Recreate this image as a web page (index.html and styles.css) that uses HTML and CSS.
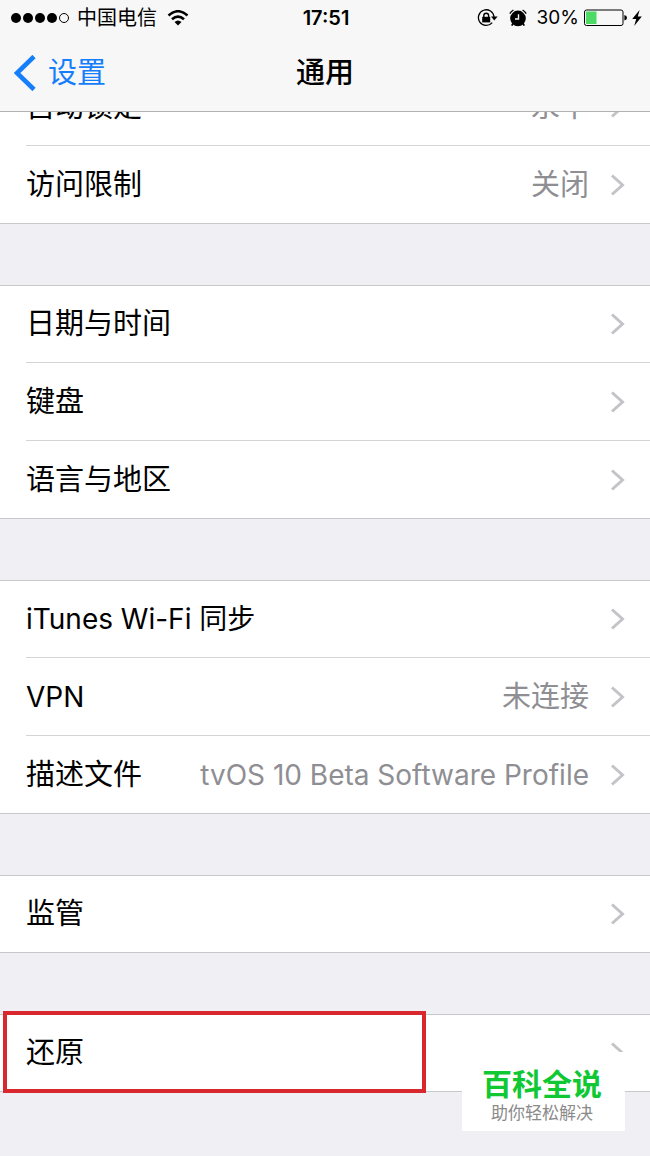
FILE: index.html
```html
<!DOCTYPE html>
<html lang="zh-CN">
<head>
    <meta charset="UTF-8">
    <meta name="viewport" content="width=device-width, initial-scale=1.0">
    <title>通用</title>
    <link rel="stylesheet" href="styles.css">
</head>
<body>
    <svg class="defs" aria-hidden="true">
        <symbol id="chevron" viewBox="0 0 16 24">
            <path d="M2 2.5 L12.5 12 L2 21.5" fill="none" stroke="#c3c3c8" stroke-width="3"/>
        </symbol>
    </svg>

    <header class="header">
        <div class="status">
            <div class="status-left">
                <svg class="signal" viewBox="0 0 60 12">
                    <circle cx="6" cy="6" r="5"/>
                    <circle cx="18" cy="6" r="5"/>
                    <circle cx="30" cy="6" r="5"/>
                    <circle cx="42" cy="6" r="5"/>
                    <circle cx="54" cy="6" r="4.5" fill="none" stroke="#000"/>
                </svg>
                <span class="carrier">中国电信</span>
                <svg class="wifi" viewBox="0 0 22 16">
                    <path d="M1.5 5.5 Q11 -3 20.5 5.5" fill="none" stroke="#000" stroke-width="2.6"/>
                    <path d="M5 9.3 Q11 3.8 17 9.3" fill="none" stroke="#000" stroke-width="2.6"/>
                    <path d="M7.5 12 Q11 8.8 14.5 12 L11 15.6 Z"/>
                </svg>
            </div>
            <span class="time">17:51</span>
            <div class="status-right">
                <svg class="lock" viewBox="0 0 22 18">
                    <path d="M15.2 13.6 A7.8 7.8 0 1 1 17 8" fill="none" stroke="#000" stroke-width="1.3"/>
                    <path d="M14 7.6 H20.6 L17.3 11.6 Z"/>
                    <rect x="5.2" y="7.8" width="8" height="5.6"/>
                    <path d="M6.8 8.5 V6.6 A2.4 2.4 0 0 1 11.6 6.6 V8.5" fill="none" stroke="#000" stroke-width="1.4"/>
                </svg>
                <svg class="alarm" viewBox="0 0 18 18">
                    <circle cx="9" cy="9.4" r="7.8"/>
                    <path d="M0.8 4.6 A10 10 0 0 1 4.4 1 M13.6 1 A10 10 0 0 1 17.2 4.6" fill="none" stroke="#000" stroke-width="1.4"/>
                    <path d="M4 14.4 L2.8 16.6 M14 14.4 L15.2 16.6" stroke="#000" stroke-width="1.8"/>
                    <path d="M9.5 5.2 V10 H6" fill="none" stroke="#f7f7f7" stroke-width="1.4"/>
                </svg>
                <span class="percent">30%</span>
                <svg class="battery" viewBox="0 0 44 18">
                    <rect x="0.5" y="1" width="38.5" height="15.5" rx="2" fill="none" stroke="#000"/>
                    <rect x="2" y="2.5" width="10.5" height="12.5" fill="#4cd964"/>
                    <path d="M40.4 6 Q43 6.6 43 8.8 Q43 11 40.4 11.6 Z"/>
                </svg>
                <svg class="bolt" viewBox="0 0 10 16">
                    <path d="M7.6 0 L0.2 9 H4.2 L2.2 16 L9.8 6.4 H5.8 Z"/>
                </svg>
            </div>
        </div>
        <nav class="navbar">
            <a href="#" class="back">
                <svg class="back-icon" viewBox="0 0 22 36">
                    <path d="M20 1.5 L3 18 L20 34.5" fill="none" stroke="#157efb" stroke-width="4.6"/>
                </svg>
                设置
            </a>
            <h1 class="title">通用</h1>
        </nav>
    </header>

    <main class="settings">
        <ul class="group">
            <li><a href="#" class="row"><span>自动锁定</span><span class="value">永不</span><svg class="arrow"><use href="#chevron"/></svg></a></li>
            <li><a href="#" class="row"><span>访问限制</span><span class="value">关闭</span><svg class="arrow"><use href="#chevron"/></svg></a></li>
        </ul>
        <ul class="group">
            <li><a href="#" class="row"><span>日期与时间</span><svg class="arrow"><use href="#chevron"/></svg></a></li>
            <li><a href="#" class="row"><span>键盘</span><svg class="arrow"><use href="#chevron"/></svg></a></li>
            <li><a href="#" class="row"><span>语言与地区</span><svg class="arrow"><use href="#chevron"/></svg></a></li>
        </ul>
        <ul class="group">
            <li><a href="#" class="row"><span class="latin">iTunes Wi-Fi 同步</span><svg class="arrow"><use href="#chevron"/></svg></a></li>
            <li><a href="#" class="row"><span class="latin">VPN</span><span class="value">未连接</span><svg class="arrow"><use href="#chevron"/></svg></a></li>
            <li><a href="#" class="row"><span>描述文件</span><span class="value latin">tvOS 10 Beta Software Profile</span><svg class="arrow"><use href="#chevron"/></svg></a></li>
        </ul>
        <ul class="group">
            <li><a href="#" class="row"><span>监管</span><svg class="arrow"><use href="#chevron"/></svg></a></li>
        </ul>
        <ul class="group reset">
            <li><a href="#" class="row"><span>还原</span><svg class="arrow"><use href="#chevron"/></svg></a></li>
            <li class="highlight" aria-hidden="true"></li>
            <li class="badge">
                <strong>百科全说</strong>
                <span>助你轻松解决</span>
            </li>
        </ul>
    </main>
</body>
</html>
```

FILE: styles.css
```css
*{
    margin: 0;
    padding: 0;
    box-sizing: border-box;
}
body{
    min-height: 100vh;
    background-color: #efeff4;
    color: #000;
    font-family: Inter, "Noto Sans CJK SC", sans-serif;
    font-size: 29px;
    line-height: 38px;
}
a{
    color: inherit;
    text-decoration: none;
}
ul{
    list-style: none;
}
svg{
    display: block;
    flex-shrink: 0;
}
.defs{
    position: absolute;
    width: 0;
    height: 0;
}

/* status bar and title */
.header{
    position: sticky;
    top: 0;
    z-index: 2;
    height: 112px;
    background-color: #f7f7f8;
    border-bottom: 1px solid #b2b2b2;
}
.status{
    display: grid;
    grid-template-columns: 1fr auto 1fr;
    align-items: center;
    height: 36px;
    padding: 0 8px 0 10px;
    font-size: 20px;
    line-height: 24px;
}
.status-left,
.status-right{
    display: flex;
    align-items: center;
}
.status-right{
    justify-content: flex-end;
}
.signal{
    width: 60px;
    height: 12px;
}
.carrier{
    margin: 0 10px 0 7px;
}
.wifi{
    width: 22px;
    height: 16px;
}
.time{
    font-weight: 600;
}
.lock{
    width: 22px;
    height: 18px;
    margin-right: 10px;
}
.alarm{
    width: 18px;
    height: 18px;
    margin-right: 10px;
}
.percent{
    font-size: 19px;
}
.battery{
    width: 44px;
    height: 18px;
    margin: 0 4px 0 5px;
}
.bolt{
    width: 10px;
    height: 16px;
}
.navbar{
    display: grid;
    grid-template-columns: 1fr auto 1fr;
    align-items: center;
    height: 74px;
    padding: 0 14px;
}
.back{
    display: flex;
    align-items: center;
    gap: 12px;
    color: #157efb;
}
.back-icon{
    width: 22px;
    height: 36px;
}
.title{
    font-size: 29px;
    font-weight: 500;
}

/* list is scrolled a little under the header */
.settings{
    display: flex;
    flex-direction: column;
    gap: 61px;
    margin-top: -44px;
    padding-bottom: 61px;
}
.group{
    background-color: #fff;
    border-top: 1px solid #c8c7cc;
    border-bottom: 1px solid #c8c7cc;
}
.row{
    display: flex;
    align-items: center;
    height: 76px;
    margin-left: 26px;
    padding-right: 24px;
    white-space: nowrap;
}
.group li + li .row{
    height: 78px;
    border-top: 1px solid #d4d3d8;
}
.value{
    margin-left: auto;
    color: #8e8e93;
}
.latin{
    font-size: 28px;
}
.arrow{
    width: 16px;
    height: 24px;
    margin-left: 21px;
}
.row span:first-child + .arrow{
    margin-left: auto;
}

/* marker and badge over the last row */
.reset{
    position: relative;
}
.highlight{
    position: absolute;
    top: -4px;
    left: 3px;
    width: 65%;
    height: 82px;
    border: 4px solid #d9272e;
}
.badge{
    position: absolute;
    top: 37px;
    right: 25px;
    display: flex;
    flex-direction: column;
    align-items: center;
    width: 163px;
    height: 79px;
    padding: 15px 3px 0 0;
    background-color: #fff;
}
.badge strong{
    color: #0fc834;
    font-size: 30px;
    line-height: 34px;
}
.badge span{
    color: #8a8a8a;
    font-size: 17px;
    line-height: 24px;
}
```
